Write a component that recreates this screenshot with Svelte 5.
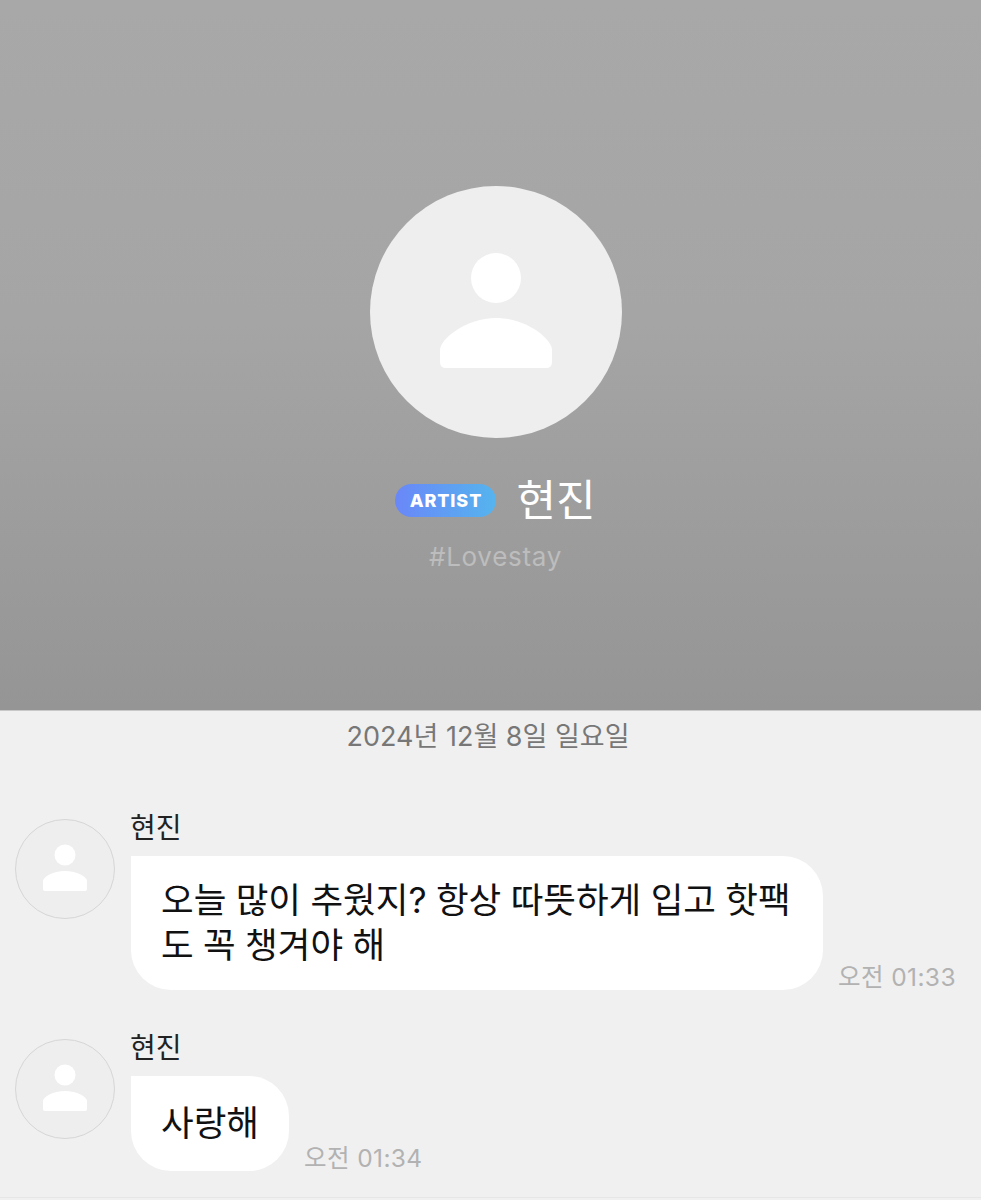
<script>
  const messages = [
    { lines: '오늘 많이 추웠지? 항상 따뜻하게 입고 핫팩도 꼭 챙겨야 해', time: '오전 01:33' },
    { lines: '사랑해', time: '오전 01:34' }
  ];
</script>

<div class="page">
  <header class="hero">
    <div class="photo">
      <svg viewBox="0 0 252 252" width="252" height="252" aria-hidden="true">
        <circle cx="126" cy="92" r="25" fill="#fff" />
        <path d="M70 164C70 153 96 132 126 132S182 153 182 164V176Q182 182 176 182H76Q70 182 70 176Z" fill="#fff" />
      </svg>
    </div>
    <div class="title">
      <span class="badge">ARTIST</span>
      <span class="artist">현진</span>
    </div>
    <p class="tag">#Lovestay</p>
  </header>

  <main class="chat">
    <p class="date">2024년 12월 8일 일요일</p>
    {#each messages as msg}
      <div class="msg">
        <div class="avatar">
          <svg viewBox="0 0 98 98" width="98" height="98" aria-hidden="true">
            <circle cx="49" cy="35" r="10.500" fill="#fff" />
            <path d="M27 61C27 57 37 51 49 51S71 57 71 61V69Q71 71 69 71H29Q27 71 27 69Z" fill="#fff" />
          </svg>
        </div>
        <div class="body">
          <div class="name">현진</div>
          <div class="row">
            <div class="bubble">{msg.lines}</div>
            <time>{msg.time}</time>
          </div>
        </div>
      </div>
    {/each}
  </main>
</div>

<style>
  :global(body) {
    margin: 0;
    background: #f0f0f0;
  }

  .page {
    font-family: Inter, "Noto Sans CJK KR", sans-serif;
    box-sizing: border-box;
    border-bottom: 1px solid #e6e6e6;
    height: 1198px;
    overflow: hidden;
  }

  .hero {
    box-sizing: border-box;
    height: 711px;
    border-bottom: 1px solid #c8c8c8;
    background: linear-gradient(#a8a8a8, #a5a5a5 45%, #959595);
    display: flex;
    flex-direction: column;
    align-items: center;
    padding: 186px 0 0 10px;
  }

  .photo {
    width: 252px;
    height: 252px;
    border-radius: 50%;
    background: #eee;
    flex: none;
  }

  .photo svg {
    display: block;
  }

  .title {
    display: flex;
    align-items: center;
    gap: 20px;
    margin-top: 36px;
    height: 52px;
  }

  .badge {
    width: 101px;
    height: 33px;
    border-radius: 17px;
    background: linear-gradient(90deg, #6a87f8, #55b4ee);
    color: #fff;
    font-size: 18px;
    font-weight: 800;
    letter-spacing: 0.9px;
    display: flex;
    align-items: center;
    justify-content: center;
  }

  .artist {
    font-size: 43px;
    line-height: 52px;
    color: #fff;
  }

  .tag {
    margin: 15px 0 0;
    font-size: 26px;
    line-height: 32px;
    color: #bdbdbd;
    letter-spacing: 0.7px;
  }

  .chat {
    display: flex;
    flex-direction: column;
  }

  .date {
    margin: 0 0 34px;
    padding: 9px 5px 0 0;
    height: 56px;
    text-align: center;
    font-size: 27px;
    line-height: 34px;
    color: #777;
  }

  .msg {
    display: flex;
    gap: 16px;
    padding-left: 15px;
    margin-bottom: 40px;
  }

  .avatar {
    width: 100px;
    height: 100px;
    box-sizing: border-box;
    border: 1px solid #d6d6d6;
    border-radius: 50%;
    background: #eee;
    flex: none;
    margin-top: 9px;
  }

  .avatar svg {
    display: block;
  }

  .body {
    min-width: 0;
  }

  .name {
    font-size: 28px;
    line-height: 36px;
    color: #222;
    margin: 0 0 10px -1px;
  }

  .row {
    display: flex;
    align-items: flex-end;
    gap: 15px;
  }

  .bubble {
    box-sizing: border-box;
    background: #fff;
    border-radius: 0 40px 40px 40px;
    padding: 22px 30px;
    max-width: 692px;
    min-height: 95px;
    display: flex;
    align-items: center;
    font-size: 35.500px;
    line-height: 45px;
    word-spacing: -0.6px;
    color: #111;
  }

  time {
    font-size: 24.500px;
    line-height: 26px;
    color: #b2b2b2;
    white-space: nowrap;
    letter-spacing: 0.4px;
  }
</style>
